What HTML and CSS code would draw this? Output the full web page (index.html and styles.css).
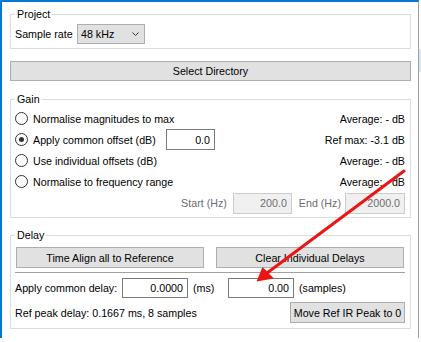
FILE: index.html
```html
<!DOCTYPE html>
<html>
<head>
<meta charset="utf-8">
<link rel="stylesheet" href="styles.css">
</head>
<body>
<div class="window">
  <fieldset class="group project">
    <legend>Project</legend>
    <div class="row-combo">
      <span class="combo-label">Sample rate</span>
      <div class="combo"><span>48 kHz</span><svg class="chev" width="7" height="4" viewBox="0 0 7 4"><path d="M0.5 0.5 L3.5 3.5 L6.5 0.5" fill="none" stroke="#333" stroke-width="1"/></svg></div>
    </div>
  </fieldset>

  <div class="btn wide">Select Directory</div>

  <fieldset class="group gain">
    <legend>Gain</legend>
    <div class="grow"><span class="radio"></span><span class="rlabel">Normalise magnitudes to max</span><span class="info">Average: - dB</span></div>
    <div class="grow"><span class="radio checked"></span><span class="rlabel">Apply common offset (dB)</span><span class="field offset">0.0</span><span class="info">Ref max: -3.1 dB</span></div>
    <div class="grow"><span class="radio"></span><span class="rlabel">Use individual offsets (dB)</span><span class="info">Average: - dB</span></div>
    <div class="grow"><span class="radio"></span><span class="rlabel">Normalise to frequency range</span><span class="info">Average: - dB</span></div>
    <div class="range">
      <span>Start (Hz)</span><span class="field disabled start">200.0</span>
      <span class="end-label">End (Hz)</span><span class="field disabled end">2000.0</span>
    </div>
  </fieldset>

  <fieldset class="group delay">
    <legend>Delay</legend>
    <div class="btn-row">
      <div class="btn">Time Align all to Reference</div>
      <div class="btn">Clear Individual Delays</div>
    </div>
    <div class="sep"></div>
    <div class="delay-row">
      <span class="dlabel">Apply common delay:</span>
      <span class="field dfield">0.0000</span>
      <span class="unit-ms">(ms)</span>
      <span class="field dfield">0.00</span>
      <span class="unit-s">(samples)</span>
    </div>
    <div class="peak-row">
      <span>Ref peak delay: 0.1667 ms, 8 samples</span>
      <div class="btn move">Move Ref IR Peak to 0</div>
    </div>
  </fieldset>
</div>
<div class="side"><div class="side-blue"></div></div>

<svg class="arrow" width="421" height="342" viewBox="0 0 421 342">
  <line x1="404" y1="171" x2="267" y2="273" stroke="#ec1515" stroke-width="3" stroke-linecap="round"/>
  <polygon points="256.5,281.5 262.5,267 274,278.5" fill="#ec1515"/>
</svg>
</body>
</html>
```
FILE: styles.css
```css
html, body {
  margin: 0;
  padding: 0;
}
body {
  font-family: "Liberation Sans", Arial, sans-serif;
  font-size: 10.7px;
  color: #000;
  background: #fff;
  display: flex;
  width: 421px;
  height: 342px;
  overflow: hidden;
}
.window {
  box-sizing: border-box;
  width: 419px;
  height: 338px;
  border-left: 2px solid #0078d7;
  border-top: 2px solid #0078d7;
  border-right: 1px solid #a0a0a0;
  padding-top: 4px;
  display: flex;
  flex-direction: column;
  flex: none;
}
.side {
  width: 2px;
  flex: none;
  padding-top: 49px;
}
.side-blue {
  height: 23px;
  background: #d5e8f8;
}
.group {
  margin: 0 7px 0 8px;
  padding: 2px 5px 4px 4px;
  border: 1px solid #dcdcdc;
  min-width: 0;
}
.group legend {
  padding: 0 2px;
  line-height: 16px;
}
.row-combo {
  display: flex;
  align-items: center;
  height: 20px;
}
.combo-label {
  width: 62px;
  flex: none;
}
.combo {
  box-sizing: border-box;
  width: 68px;
  height: 20px;
  border: 1px solid #adadad;
  background: #e1e1e1;
  display: flex;
  align-items: center;
  justify-content: space-between;
  padding: 0 5px 0 3px;
}
.chev {
  display: block;
}
.btn {
  box-sizing: border-box;
  height: 20px;
  border: 1px solid #adadad;
  background: #e1e1e1;
  display: flex;
  align-items: center;
  justify-content: center;
  white-space: nowrap;
}
.btn.wide {
  margin: 12px 7px 0 8px;
}
.gain {
  margin-top: 10px;
  padding-top: 1px;
  padding-bottom: 3px;
}
.grow {
  height: 21px;
  display: flex;
  align-items: center;
}
.radio {
  box-sizing: border-box;
  width: 13px;
  height: 13px;
  border: 1px solid #333;
  border-radius: 50%;
  background: #fff;
  margin-right: 5px;
  flex: none;
  display: flex;
  align-items: center;
  justify-content: center;
}
.radio.checked::after {
  content: "";
  width: 5px;
  height: 5px;
  border-radius: 50%;
  background: #333;
}
.rlabel {
  width: 133px;
  flex: none;
  white-space: nowrap;
}
.info {
  margin-left: auto;
  white-space: nowrap;
}
.field {
  box-sizing: border-box;
  height: 21px;
  border: 1px solid #7a7a7a;
  background: #fff;
  display: flex;
  align-items: center;
  justify-content: flex-end;
  padding-right: 4px;
  flex: none;
}
.field.offset {
  width: 49px;
}
.range {
  height: 22px;
  display: flex;
  align-items: center;
  justify-content: flex-end;
  color: #6d6d6d;
}
.field.disabled {
  border-color: #cccccc;
  background: #f0f0f0;
  color: #6d6d6d;
}
.field.start {
  width: 59px;
  margin-left: 6px;
}
.end-label {
  margin-left: 7px;
}
.field.end {
  width: 60px;
  margin-left: 4px;
}
.delay {
  margin-top: 9px;
  padding-top: 4px;
  padding-bottom: 5px;
}
.btn-row {
  display: flex;
  gap: 12px;
  padding: 0 1px;
}
.btn-row .btn {
  flex: 1;
  height: 21px;
}
.sep {
  border-top: 1px solid #a0a0a0;
  margin: 4px 0 5px;
}
.delay-row {
  height: 20px;
  display: flex;
  align-items: center;
}
.dlabel {
  width: 107px;
  flex: none;
}
.field.dfield {
  width: 66px;
  height: 20px;
}
.unit-ms {
  width: 35px;
  margin-left: 5px;
  flex: none;
}
.unit-s {
  margin-left: 5px;
}
.peak-row {
  margin-top: 4px;
  height: 21px;
  display: flex;
  align-items: center;
  justify-content: space-between;
}
.btn.move {
  width: 115px;
  height: 21px;
}
.arrow {
  position: absolute;
  left: 0;
  top: 0;
  pointer-events: none;
}
```
